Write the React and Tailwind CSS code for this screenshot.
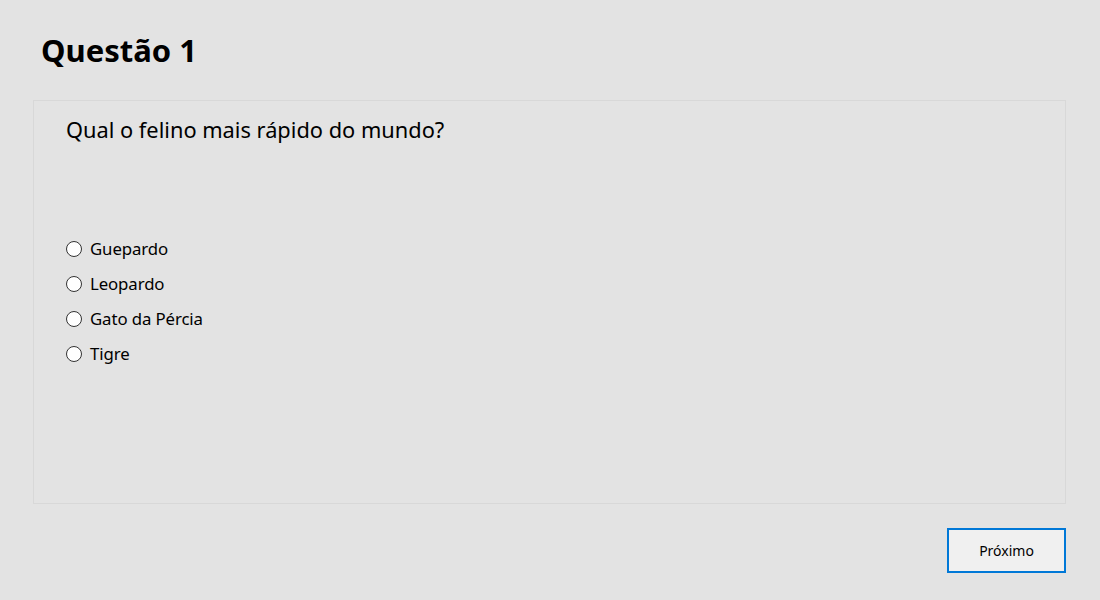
import React, { useState } from 'react';

const options = ['Guepardo', 'Leopardo', 'Gato da Pércia', 'Tigre'];

export default function App() {
    const [selected, setSelected] = useState(null);

    return (
        <div className="min-h-[600px] bg-[#e3e3e3] pl-[33px] pr-[34px] pt-[26px] text-black" style={{ fontFamily: '"Noto Sans", "Open Sans", sans-serif' }}>
            {/* Title */}
            <h1 className="pl-[8px] text-[31px] font-bold leading-[48px]">Questão 1</h1>

            {/* Question card */}
            <div className="mt-[26px] h-[404px] border border-[#d8d8d8] pl-[32px] pt-[13px]">
                <p className="text-[21.8px] leading-[32px]">Qual o felino mais rápido do mundo?</p>

                <div className="mt-[85px] flex flex-col">
                    {options.map((opt, i) => (
                        <label key={opt} className="flex h-[35px] cursor-pointer items-center gap-[8px]" onClick={() => setSelected(i)}>
                            <span className="flex h-[16px] w-[16px] items-center justify-center rounded-full border border-[#333] bg-white">
                                {selected === i && <span className="h-[8px] w-[8px] rounded-full bg-[#333]" />}
                            </span>
                            <span className="text-[16.8px] leading-[20px] tracking-[-0.1px]">{opt}</span>
                        </label>
                    ))}
                </div>
            </div>

            {/* Actions */}
            <div className="mt-[24px] flex justify-end">
                <button type="button" className="h-[45px] w-[119px] border-2 border-[#0078d7] bg-[#f0f0f0] text-[14px]">
                    Próximo
                </button>
            </div>
        </div>
    );
}
